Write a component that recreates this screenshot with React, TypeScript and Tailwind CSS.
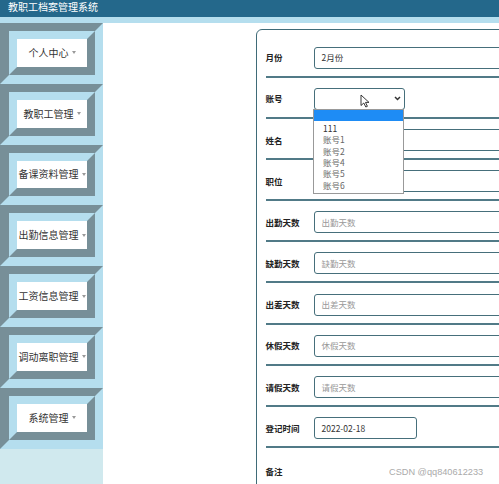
const menus = ["个人中心", "教职工管理", "备课资料管理", "出勤信息管理", "工资信息管理", "调动离职管理", "系统管理"];

const rows = [
  { label: "出勤天数", placeholder: "出勤天数" },
  { label: "缺勤天数", placeholder: "缺勤天数" },
  { label: "出差天数", placeholder: "出差天数" },
  { label: "休假天数", placeholder: "休假天数" },
  { label: "请假天数", placeholder: "请假天数" },
];

const options = ["111", "账号1", "账号2", "账号4", "账号5", "账号6"];

function MenuBlock({ name }: { name: string }) {
  return (
    <div className="h-[60.8px] border-t-[8px] border-l-[9px] border-r-[8px] border-b-[9px] border-t-[#778f98] border-l-[#778f98] border-r-[#b5deee] border-b-[#b5deee]">
      <div className="h-full border-[8px] border-t-[#b5deee] border-l-[#b5deee] border-r-[#778f98] border-b-[#778f98] bg-white flex items-center justify-center gap-[3px]">
        <span className="text-[10px] text-[#333] leading-none">{name}</span>
        <span className="w-0 h-0 border-l-[2.5px] border-r-[2.5px] border-t-[3px] border-l-transparent border-r-transparent border-t-[#999]" />
      </div>
    </div>
  );
}

function Row({ label, children, first }: { label: string; children: React.ReactNode; first?: boolean }) {
  return (
    <div className={`flex items-center border-b-2 border-[#517a87] pb-[7px] ${first ? "" : "pt-[10.2px]"}`}>
      <div className="w-[48px] text-[8.5px] font-bold text-[#222]">{label}</div>
      {children}
    </div>
  );
}

function Field({ text, placeholder, width = "w-[230px]" }: { text?: string; placeholder?: string; width?: string }) {
  return (
    <div className={`${width} h-[22px] shrink-0 border-[1.5px] border-[#466f7b] rounded-[3px] flex items-center pl-[7px] text-[8.5px]`}>
      {text ? <span className="text-[#333]">{text}</span> : <span className="text-[#999]">{placeholder}</span>}
    </div>
  );
}

export default function App() {
  return (
    <div className="relative w-full h-[484px] overflow-hidden bg-white font-['Noto_Sans_CJK_SC',sans-serif]">
      <div className="h-[17px] bg-[#24688b] pl-[8px] pt-[1px] text-white text-[10px] leading-[11px]">教职工档案管理系统</div>
      <div className="h-[6px] bg-[#b5deee]" />
      <div className="flex h-[461px]">
        <div className="w-[103px] shrink-0 bg-[#d0e9ee] flex flex-col">
          {menus.map((m) => (
            <MenuBlock key={m} name={m} />
          ))}
        </div>
        <div className="flex-1 overflow-hidden">
          <div className="ml-[153px] mt-[6px] w-[320px] h-[500px] rounded-[6px] border-[1.5px] border-[#3f6b78] pl-[8.5px] pt-[16.5px]">
            <Row label="月份" first>
              <Field text="2月份" />
            </Row>
            <Row label="账号">
              <div className="relative w-[91px] h-[22px] shrink-0 border-[1.5px] border-[#466f7b] rounded-[3px]">
                <svg className="absolute left-[45px] top-[5px]" width="10" height="14" viewBox="0 0 10 14">
                  <path d="M1 1 L1 11.5 L3.8 9 L5.8 13 L7.4 12.3 L5.5 8.4 L9 8.4 Z" fill="#fff" stroke="#222" strokeWidth="0.9" strokeLinejoin="round" />
                </svg>
                <svg className="absolute right-[3px] top-[7px]" width="7" height="5" viewBox="0 0 7 5">
                  <polyline points="1,1 3.5,3.5 6,1" fill="none" stroke="#333" strokeWidth="1.5" />
                </svg>
                <div className="absolute z-10 top-full left-[-1.5px] w-[91px] border border-[#999] bg-white pb-[1.5px]">
                  <div className="h-[11px] mt-[0.5px] bg-[#1e8cf5]" />
                  <div className="pt-[1.5px]">
                    {options.map((o, i) => (
                      <div key={o} className={`pl-[9px] text-[8.5px] leading-[11.4px] ${i === 0 ? "text-[#333]" : "text-[#666]"}`}>
                        {o}
                      </div>
                    ))}
                  </div>
                </div>
              </div>
            </Row>
            <Row label="姓名">
              <Field placeholder="" />
            </Row>
            <Row label="职位">
              <Field placeholder="" />
            </Row>
            {rows.map((r) => (
              <Row key={r.label} label={r.label}>
                <Field placeholder={r.placeholder} />
              </Row>
            ))}
            <Row label="登记时间">
              <Field text="2022-02-18" width="w-[103px]" />
            </Row>
            <div className="flex items-center pt-[17px]">
              <div className="w-[48px] text-[8.5px] font-bold text-[#222]">备注</div>
            </div>
          </div>
        </div>
      </div>
      <div className="absolute left-[389px] top-[466px] whitespace-nowrap text-[9.2px] leading-[12px] text-[#aaa] font-['Liberation_Sans',sans-serif]">CSDN @qq840612233</div>
    </div>
  );
}
